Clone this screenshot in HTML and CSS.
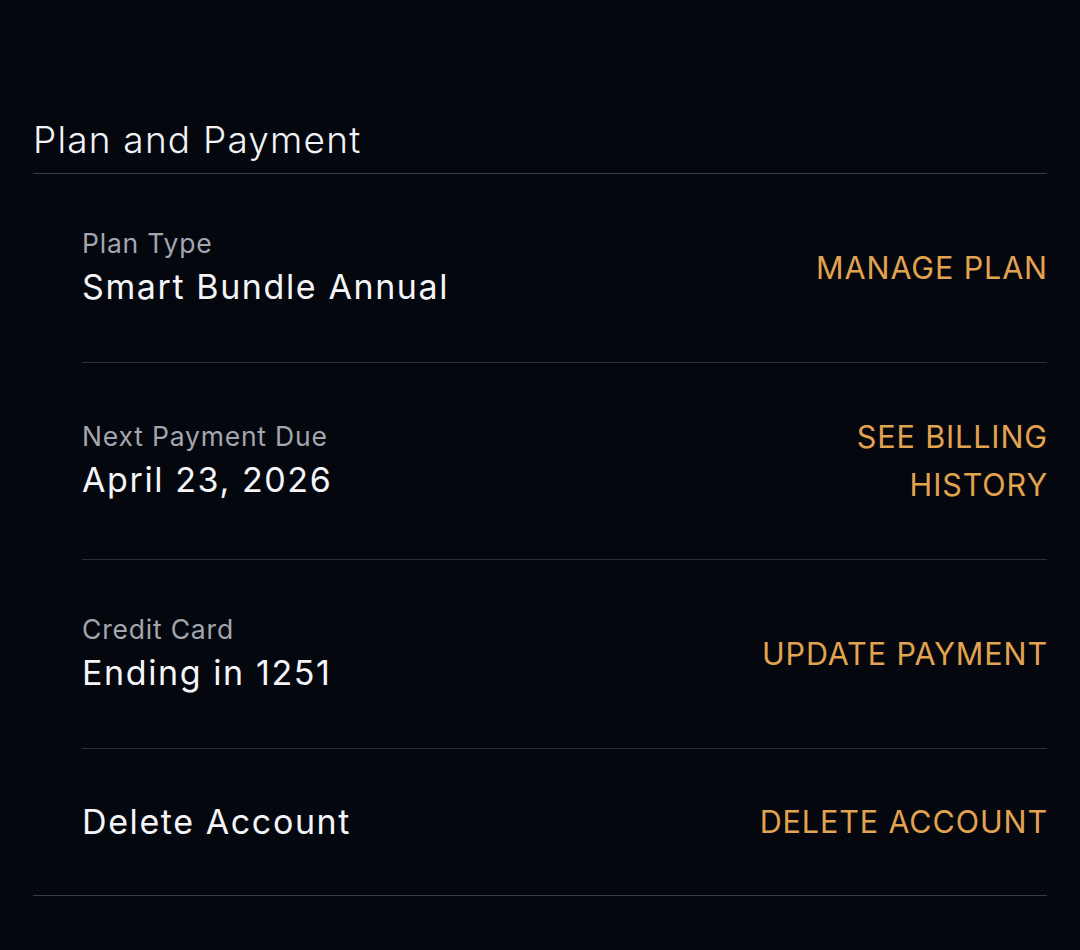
FILE: index.html
```html
<!DOCTYPE html>
<html lang="en">
<head>
  <meta charset="UTF-8" />
  <meta name="viewport" content="width=device-width, initial-scale=1.0"/>
  <title>Plan and Payment</title>
  <link rel="stylesheet" href="styles.css">
</head>
<body>
  <section class="settings">
    <h2 class="section-title">Plan and Payment</h2>

    <div class="rows">
      <div class="row">
        <div class="info">
          <span class="label">Plan Type</span>
          <span class="value">Smart Bundle Annual</span>
        </div>
        <a href="#" class="action">MANAGE PLAN</a>
      </div>

      <div class="row">
        <div class="info">
          <span class="label">Next Payment Due</span>
          <span class="value">April 23, 2026</span>
        </div>
        <a href="#" class="action narrow">SEE BILLING HISTORY</a>
      </div>

      <div class="row">
        <div class="info">
          <span class="label">Credit Card</span>
          <span class="value">Ending in 1251</span>
        </div>
        <a href="#" class="action">UPDATE PAYMENT</a>
      </div>

      <div class="row last">
        <div class="info">
          <span class="value">Delete Account</span>
        </div>
        <a href="#" class="action">DELETE ACCOUNT</a>
      </div>
    </div>
  </section>
</body>
</html>
```

FILE: styles.css
```css
body {
  margin: 0;
  background-color: #05070f;
  font-family: Inter, "Noto Sans", sans-serif;
  color: #f4f5f8;
}

.settings {
  padding: 112px 33px 0 33px;
}

.section-title {
  margin: 0;
  font-size: 37px;
  font-weight: 300;
  letter-spacing: 1.2px;
  line-height: 56px;
  padding-bottom: 5px;
  color: #f2f3f7;
  border-bottom: 1px solid #3a3d49;
}

.rows {
  border-bottom: 1px solid #3a3d49;
}

.row {
  display: flex;
  justify-content: space-between;
  align-items: center;
  margin-left: 49px;
  padding: 52px 0;
  border-bottom: 1px solid #2c2f3a;
}

.row.last {
  padding: 49px 0;
  border-bottom: none;
}

.info {
  display: flex;
  flex-direction: column;
}

.label {
  font-size: 26.5px;
  letter-spacing: 0.8px;
  line-height: 34px;
  color: #a3a6ae;
}

.label + .value {
  margin-top: 4px;
}

.value {
  font-size: 34px;
  letter-spacing: 1.6px;
  line-height: 46px;
  color: #f4f5f8;
}

.action {
  font-size: 30.5px;
  letter-spacing: 0.9px;
  line-height: 48px;
  margin-right: -1px;
  color: #e2a350;
  text-decoration: none;
  text-align: right;
}

.action.narrow {
  max-width: 210px;
  margin: -2px -1px -2px 0;
}
```
